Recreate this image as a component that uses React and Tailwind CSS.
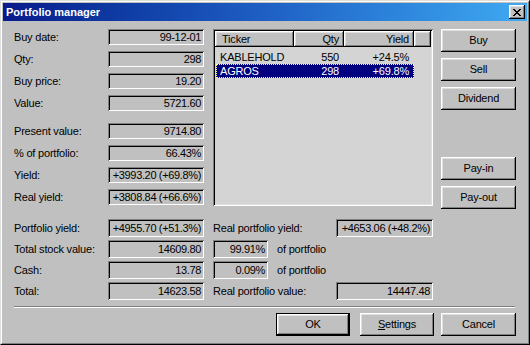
const raised =
  "bg-[#c0c0c0] shadow-[inset_-1px_-1px_#000,inset_1px_1px_#fff,inset_-2px_-2px_#808080,inset_2px_2px_#dfdfdf]";
const sunken =
  "bg-[#c0c0c0] shadow-[inset_1px_1px_#808080,inset_-1px_-1px_#fff,inset_2px_2px_#000,inset_-2px_-2px_#c0c0c0]";

function Box({ children, w = "w-[96px]", h = "h-[16px]" }) {
  return (
    <div className={`${w} ${h} ${sunken} flex items-center justify-end pr-[3px] whitespace-nowrap tracking-[-0.35px]`}>
      {children}
    </div>
  );
}

function Row({ label, value }) {
  return (
    <div className="flex items-center h-[16px]">
      <div className="flex-1 pl-[1px] whitespace-nowrap">{label}</div>
      <Box>{value}</Box>
    </div>
  );
}

function Btn({ children, className = "" }) {
  return (
    <div className={`h-[23px] ${raised} flex items-center justify-center ${className}`}>
      {children}
    </div>
  );
}

export default function App() {
  return (
    <div className="w-[530px] h-[345px] bg-[#c0c0c0] text-black text-[11px] leading-none tracking-[-0.2px] font-['Liberation_Sans','Arial',sans-serif] border border-t-[#dfdfdf] border-l-[#dfdfdf] border-b-black border-r-black">
      <div className="w-full h-full border border-t-white border-l-white border-b-[#808080] border-r-[#808080] p-[1px] flex flex-col">
        {/* Title bar */}
        <div className="h-[18px] flex items-center bg-linear-to-r from-[#0a1a8a] via-[#1f5fc4] to-[#40aaf2] pl-[3px] pr-[2px]">
          <span className="text-white font-bold tracking-normal text-[11px]">Portfolio manager</span>
          <div className={`ml-auto w-[16px] h-[14px] ${raised} flex items-center justify-center`}>
            <svg width="8" height="7" viewBox="0 0 8 7" shapeRendering="crispEdges">
              <path d="M0 0h2v1h-2zM6 0h2v1h-2zM1 1h2v1h-2zM5 1h2v1h-2zM2 2h4v1h-4zM3 3h2v1h-2zM2 4h4v1h-4zM1 5h2v1h-2zM5 5h2v1h-2zM0 6h2v1h-2zM6 6h2v1h-2z" fill="#000" />
            </svg>
          </div>
        </div>

        {/* Content */}
        <div className="flex-1 flex flex-col pl-[10px] pr-[11px] pt-[8px]">
          {/* Top section */}
          <div className="flex items-start">
            <div className="w-[191px] flex flex-col">
              <div className="flex flex-col gap-[6px]">
                <Row label="Buy date:" value="99-12-01" />
                <Row label="Qty:" value="298" />
                <Row label="Buy price:" value="19.20" />
                <Row label="Value:" value="5721.60" />
              </div>
              <div className="flex flex-col gap-[6px] mt-[12px]">
                <Row label="Present value:" value="9714.80" />
                <Row label="% of portfolio:" value="66.43%" />
                <Row label="Yield:" value="+3993.20 (+69.8%)" />
                <Row label="Real yield:" value="+3808.84 (+66.6%)" />
              </div>
            </div>

            {/* List view */}
            <div className="ml-[9px] w-[220px] h-[177px] p-[2px] bg-[#c0c0c0] shadow-[inset_1px_1px_#808080,inset_-1px_-1px_#fff,inset_2px_2px_#000,inset_-2px_-2px_#dfdfdf]">
              <div className="w-full h-full bg-[#d4d4d4] flex flex-col">
                <div className="flex h-[16px]">
                  <div className={`w-[79px] ${raised} flex items-center pl-[7px]`}>Ticker</div>
                  <div className={`w-[50px] ${raised} flex items-center justify-end pr-[5px]`}>Qty</div>
                  <div className={`w-[70px] ${raised} flex items-center justify-end pr-[5px]`}>Yield</div>
                  <div className={`flex-1 ${raised}`}></div>
                </div>
                <div className="flex flex-col pt-[3px]">
                  <div className="flex h-[14px] w-[198px] ml-[1px] items-center">
                    <div className="w-[78px] pl-[4px]">KABLEHOLD</div>
                    <div className="w-[50px] text-right pr-[5px]">550</div>
                    <div className="w-[70px] text-right pr-[5px]">+24.5%</div>
                  </div>
                  <div className="flex h-[14px] w-[198px] ml-[1px] items-center bg-[#000080] text-white border border-dotted border-[#ffff80]">
                    <div className="w-[77px] pl-[3px]">AGROS</div>
                    <div className="w-[50px] text-right pr-[5px]">298</div>
                    <div className="w-[69px] text-right pr-[4px]">+69.8%</div>
                  </div>
                </div>
              </div>
            </div>

            {/* Right buttons */}
            <div className="ml-[8px] w-[75px] flex flex-col">
              <div className="flex flex-col gap-[6px]">
                <Btn>Buy</Btn>
                <Btn>Sell</Btn>
                <Btn>Dividend</Btn>
              </div>
              <div className="flex flex-col gap-[6px] mt-[47px]">
                <Btn>Pay-in</Btn>
                <Btn>Pay-out</Btn>
              </div>
            </div>
          </div>

          {/* Bottom section */}
          <div className="mt-[10px] flex flex-col gap-[3px]">
            <div className="flex items-center h-[18px]">
              <div className="w-[95px] pl-[1px] whitespace-nowrap">Portfolio yield:</div>
              <Box h="h-[18px]">+4955.70 (+51.3%)</Box>
              <div className="ml-[9px] w-[123px] whitespace-nowrap">Real portfolio yield:</div>
              <Box w="w-[97px]" h="h-[18px]">+4653.06 (+48.2%)</Box>
            </div>
            <div className="flex items-center h-[18px]">
              <div className="w-[95px] pl-[1px] whitespace-nowrap">Total stock value:</div>
              <Box h="h-[18px]">14609.80</Box>
              <div className="ml-[9px]">
                <Box w="w-[55px]" h="h-[18px]">99.91%</Box>
              </div>
              <div className="ml-[9px] whitespace-nowrap">of portfolio</div>
            </div>
            <div className="flex items-center h-[18px]">
              <div className="w-[95px] pl-[1px] whitespace-nowrap">Cash:</div>
              <Box h="h-[18px]">13.78</Box>
              <div className="ml-[9px]">
                <Box w="w-[55px]" h="h-[18px]">0.09%</Box>
              </div>
              <div className="ml-[9px] whitespace-nowrap">of portfolio</div>
            </div>
            <div className="flex items-center h-[18px]">
              <div className="w-[95px] pl-[1px] whitespace-nowrap">Total:</div>
              <Box h="h-[18px]">14623.58</Box>
              <div className="ml-[9px] w-[123px] whitespace-nowrap">Real portfolio value:</div>
              <Box w="w-[97px]" h="h-[18px]">14447.48</Box>
            </div>
          </div>

          {/* Separator */}
          <div className="mt-[6px] ml-[1px] w-[501px] h-[2px] border-t border-t-[#808080] border-b border-b-white"></div>

          {/* Bottom buttons */}
          <div className="mt-[5px] flex justify-end">
            <div className="w-[74px] h-[23px] border border-black">
              <div className={`w-full h-full ${raised} flex items-center justify-center`}>OK</div>
            </div>
            <Btn className="ml-[10px] w-[74px]">
              <span><span className="underline">S</span>ettings</span>
            </Btn>
            <Btn className="ml-[7px] w-[75px]">Cancel</Btn>
          </div>
        </div>
      </div>
    </div>
  );
}
